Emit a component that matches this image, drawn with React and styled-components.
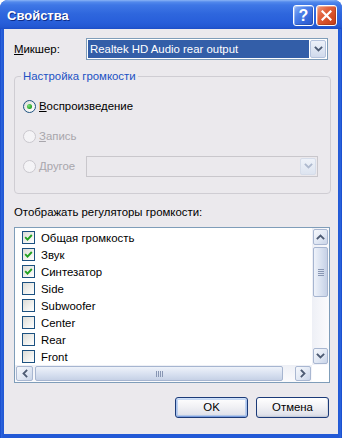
import React from "react";
import styled, { createGlobalStyle } from "styled-components";

const GlobalStyle = createGlobalStyle`
  html, body { margin: 0; padding: 0; background: #ffffff; }
  body { font-family: "Liberation Sans", Arial, sans-serif; font-size: 11.4px; color: #000; }
  * { box-sizing: border-box; }
`;

const Window = styled.div`
  width: 342px;
  height: 438px;
  display: flex;
  flex-direction: column;
  background: linear-gradient(to right, #0B3CC4 0px, #2D66DD 1px, #2259D6 3px, #2259D6 calc(100% - 3px), #2D66DD calc(100% - 1px), #0B3CC4 100%);
  border-radius: 8px 8px 0 0;
  overflow: hidden;
`;

const TitleBar = styled.div`
  height: 29px;
  flex: none;
  display: flex;
  align-items: center;
  padding: 2px 5px 0 7px;
  background: linear-gradient(to bottom, #8AB4F6 0px, #5289EC 2px, #3E77E6 5px, #2E66DD 14px, #285FDA 22px, #2358D2 27px, #1C4DC6 29px);
`;

const Title = styled.div`
  flex: 1;
  color: #ffffff;
  font-family: "Liberation Sans", Arial, sans-serif;
  font-weight: bold;
  font-size: 13px;
  text-shadow: 1px 1px 0 #0E2D88;
`;

const CaptionButtons = styled.div`
  display: flex;
  gap: 2px;
`;

const CaptionButton = styled.div`
  width: 21px;
  height: 21px;
  border: 1px solid #ffffff;
  border-radius: 3px;
  display: flex;
  align-items: center;
  justify-content: center;
  color: #ffffff;
  font-family: "Liberation Sans", Arial, sans-serif;
  font-weight: bold;
  font-size: 16px;
  background: ${(p) =>
    p.$close
      ? "linear-gradient(135deg, #F09A7C 0%, #E2643F 35%, #D24B24 70%, #C23E1C 100%)"
      : "linear-gradient(135deg, #8EB2F5 0%, #4F82EA 35%, #3566DA 70%, #2C58CC 100%)"};
  box-shadow: inset 1px 1px 0 rgba(255, 255, 255, 0.35), inset -1px -1px 0 rgba(0, 0, 0, 0.15);
`;

const Client = styled.div`
  flex: 1;
  margin: 0 4px 4px;
  background: #EBE9ED;
  padding: 9px 8px 0 10px;
  display: flex;
  flex-direction: column;
`;

const MixerRow = styled.div`
  display: flex;
  align-items: center;
  height: 22px;
  margin-right: 2px;
`;

const FieldLabel = styled.div`
  width: ${(p) => p.$width || "auto"};
  flex: none;
  color: ${(p) => (p.$disabled ? "#A8A6AC" : "#000")};
  line-height: 13px;
`;

const Accel = styled.span`
  text-decoration: underline;
`;

const Combo = styled.div`
  flex: 1;
  height: ${(p) => p.$height || "22px"};
  display: flex;
  align-items: stretch;
  gap: 1px;
  padding: 1px;
  border: 1px solid ${(p) => (p.$disabled ? "#C9C7CC" : "#7F9DB9")};
  background: ${(p) => (p.$disabled ? "#EBE9ED" : "#ffffff")};
`;

const ComboValue = styled.div`
  flex: 1;
  display: flex;
  align-items: center;
  padding: 0 2px;
  color: #ffffff;
  background: ${(p) => (p.$selected ? "#335EA8" : "transparent")};
  white-space: nowrap;
  overflow: hidden;
`;

const ComboArrow = styled.div`
  width: 16px;
  flex: none;
  display: flex;
  align-items: center;
  justify-content: center;
  border: 1px solid ${(p) => (p.$disabled ? "#D6DDEA" : "#B4C2DC")};
  border-radius: 2px;
  background: ${(p) =>
    p.$disabled
      ? "linear-gradient(to bottom, #EEF2F9, #DDE4F0)"
      : "linear-gradient(to bottom, #EDF1F9, #D0DAEC)"};
`;

const Group = styled.fieldset`
  margin: 10px -1px 0 0;
  padding: 12px 12px 16px 8px;
  border: 1px solid #CFCDD3;
  border-radius: 4px;
  min-width: 0;
  display: flex;
  flex-direction: column;
  gap: 8px;
`;

const Legend = styled.legend`
  padding: 0 2px;
  margin-left: -2px;
  color: #2152C4;
  line-height: 13px;
`;

const RadioRow = styled.div`
  height: 22px;
  display: flex;
  align-items: center;
`;

const RadioLabel = styled.div`
  display: flex;
  align-items: center;
  gap: 3px;
  width: ${(p) => p.$width || "auto"};
  flex: none;
`;

const RadioCircle = styled.span`
  width: 13px;
  height: 13px;
  flex: none;
  border-radius: 50%;
  display: flex;
  align-items: center;
  justify-content: center;
  border: 1px solid ${(p) => (p.$disabled ? "#CAC8CE" : "#1C5180")};
  background: ${(p) =>
    p.$disabled
      ? "#F4F3F6"
      : "linear-gradient(135deg, #DCDCD7 0%, #F4F4F2 60%, #FFFFFF 100%)"};
`;

const RadioDot = styled.span`
  width: 5px;
  height: 5px;
  border-radius: 50%;
  background: radial-gradient(circle at 35% 35%, #7BE07A, #21A121 70%, #108A10);
`;

const SectionLabel = styled.div`
  margin-top: 12px;
  line-height: 13px;
`;

const ListBox = styled.div`
  margin-top: 8px;
  height: 156px;
  border: 1px solid #7F9DB9;
  background: #ffffff;
  display: grid;
  grid-template-columns: 1fr 17px;
  grid-template-rows: 1fr 17px;
`;

const Items = styled.div`
  padding-top: 1px;
  overflow: hidden;
`;

const Item = styled.div`
  height: 17px;
  display: flex;
  align-items: center;
  gap: 6px;
  padding-left: 7px;
  white-space: nowrap;
`;

const CheckBox = styled.span`
  width: 13px;
  height: 13px;
  flex: none;
  display: flex;
  align-items: center;
  justify-content: center;
  border: 1px solid #1C5180;
  background: linear-gradient(135deg, #DCDCD7 0%, #F2F2EF 60%, #FFFFFF 100%);
`;

const VScroll = styled.div`
  display: flex;
  flex-direction: column;
  padding: 1px;
  background: linear-gradient(to right, #EEF0F6, #FBFBFD);
`;

const HScroll = styled.div`
  display: flex;
  flex-direction: row;
  padding: 1px;
  background: linear-gradient(to bottom, #EEF0F6, #FBFBFD);
`;

const Corner = styled.div`
  background: #ffffff;
`;

const ScrollButton = styled.div`
  flex: none;
  width: ${(p) => p.$w}px;
  height: ${(p) => p.$h}px;
  display: flex;
  align-items: center;
  justify-content: center;
  border: 1px solid #A9B7D1;
  border-radius: 2px;
  background: linear-gradient(135deg, #F6F8FC 0%, #E1E8F4 55%, #C9D4E8 100%);
`;

const Thumb = styled.div`
  flex: none;
  display: flex;
  align-items: center;
  justify-content: center;
  border: 1px solid #A6B5D0;
  border-radius: 2px;
  ${(p) =>
    p.$vertical
      ? `margin-top: 2px; height: 50px; background: linear-gradient(to right, #EEF2FA, #D6DFEF 60%, #C6D1E6);`
      : `margin-left: 2px; width: 248px; background: linear-gradient(to bottom, #EEF2FA, #D6DFEF 60%, #C6D1E6);`}
`;

const Grip = styled.div`
  display: flex;
  flex-direction: ${(p) => (p.$vertical ? "column" : "row")};
  gap: 1px;
`;

const GripLine = styled.span`
  display: block;
  background: #8896B3;
  ${(p) => (p.$vertical ? "width: 6px; height: 1px;" : "width: 1px; height: 6px;")}
`;

const Spacer = styled.div`
  flex: 1;
`;

const ButtonRow = styled.div`
  margin-top: 14px;
  margin-right: 1px;
  display: flex;
  justify-content: flex-end;
  gap: 8px;
`;

const Button = styled.div`
  width: 73px;
  height: 21px;
  display: flex;
  align-items: center;
  justify-content: center;
  border: 1px solid #1B3A78;
  border-radius: 3px;
  background: linear-gradient(to bottom, #FFFFFF 0%, #F3F3F6 40%, #E2E4EC 85%, #CDD2DE 100%);
  box-shadow: ${(p) =>
    p.$default
      ? "inset 0 1px 0 #CEE0FA, inset 1px 0 0 #A9C3EE, inset -1px 0 0 #A9C3EE, inset 0 -1px 0 #7C9EDE, inset 0 0 0 2px rgba(152, 184, 234, 0.55)"
      : "inset 0 -1px 0 #C6CBD8, inset -1px 0 0 #D8DCE5"};
  line-height: 13px;
`;

const Chevron = ({ dir = "down", color = "#4D5B73" }) => {
  const paths = {
    down: "M1.5 1.5 L4.5 4.5 L7.5 1.5",
    up: "M1.5 4.5 L4.5 1.5 L7.5 4.5",
  };
  if (dir === "left" || dir === "right") {
    const d = dir === "left" ? "M4.5 1.5 L1.5 4.5 L4.5 7.5" : "M1.5 1.5 L4.5 4.5 L1.5 7.5";
    return (
      <svg width="6" height="9" viewBox="0 0 6 9">
        <path d={d} fill="none" stroke={color} strokeWidth="1.8" strokeLinecap="square" />
      </svg>
    );
  }
  return (
    <svg width="9" height="6" viewBox="0 0 9 6">
      <path d={paths[dir]} fill="none" stroke={color} strokeWidth="1.8" strokeLinecap="square" />
    </svg>
  );
};

const CheckMark = () => (
  <svg width="9" height="9" viewBox="0 0 9 9">
    <path d="M1.2 4.2 L3.5 6.6 L7.8 2" fill="none" stroke="#21A121" strokeWidth="1.9" />
  </svg>
);

const CloseX = () => (
  <svg width="11" height="11" viewBox="0 0 11 11">
    <path d="M1.5 1.5 L9.5 9.5 M9.5 1.5 L1.5 9.5" stroke="#ffffff" strokeWidth="2.2" strokeLinecap="square" />
  </svg>
);

const items = [
  { label: "Общая громкость", checked: true },
  { label: "Звук", checked: true },
  { label: "Синтезатор", checked: true },
  { label: "Side", checked: false },
  { label: "Subwoofer", checked: false },
  { label: "Center", checked: false },
  { label: "Rear", checked: false },
  { label: "Front", checked: false },
];

export default function App() {
  return (
    <>
      <GlobalStyle />
      <Window>
        <TitleBar>
          <Title>Свойства</Title>
          <CaptionButtons>
            <CaptionButton>?</CaptionButton>
            <CaptionButton $close>
              <CloseX />
            </CaptionButton>
          </CaptionButtons>
        </TitleBar>
        <Client>
          <MixerRow>
            <FieldLabel $width="72px">
              <Accel>М</Accel>икшер:
            </FieldLabel>
            <Combo>
              <ComboValue $selected>Realtek HD Audio rear output</ComboValue>
              <ComboArrow>
                <Chevron dir="down" />
              </ComboArrow>
            </Combo>
          </MixerRow>

          <Group>
            <Legend>Настройка громкости</Legend>
            <RadioRow>
              <RadioLabel>
                <RadioCircle>
                  <RadioDot />
                </RadioCircle>
                <FieldLabel>
                  <Accel>В</Accel>оспроизведение
                </FieldLabel>
              </RadioLabel>
            </RadioRow>
            <RadioRow>
              <RadioLabel>
                <RadioCircle $disabled />
                <FieldLabel $disabled>
                  <Accel>З</Accel>апись
                </FieldLabel>
              </RadioLabel>
            </RadioRow>
            <RadioRow>
              <RadioLabel $width="63px">
                <RadioCircle $disabled />
                <FieldLabel $disabled>
                  <Accel>Д</Accel>ругое
                </FieldLabel>
              </RadioLabel>
              <Combo $disabled $height="21px">
                <ComboValue />
                <ComboArrow $disabled>
                  <Chevron dir="down" color="#AEB9CE" />
                </ComboArrow>
              </Combo>
            </RadioRow>
          </Group>

          <SectionLabel>Отображать регуляторы громкости:</SectionLabel>

          <ListBox>
            <Items>
              {items.map((it) => (
                <Item key={it.label}>
                  <CheckBox>{it.checked && <CheckMark />}</CheckBox>
                  {it.label}
                </Item>
              ))}
            </Items>
            <VScroll>
              <ScrollButton $w={15} $h={16}>
                <Chevron dir="up" />
              </ScrollButton>
              <Thumb $vertical>
                <Grip $vertical>
                  <GripLine $vertical />
                  <GripLine $vertical />
                  <GripLine $vertical />
                  <GripLine $vertical />
                </Grip>
              </Thumb>
              <Spacer />
              <ScrollButton $w={15} $h={16}>
                <Chevron dir="down" />
              </ScrollButton>
            </VScroll>
            <HScroll>
              <ScrollButton $w={17} $h={15}>
                <Chevron dir="left" />
              </ScrollButton>
              <Thumb>
                <Grip>
                  <GripLine />
                  <GripLine />
                  <GripLine />
                  <GripLine />
                </Grip>
              </Thumb>
              <Spacer />
              <ScrollButton $w={16} $h={15}>
                <Chevron dir="right" />
              </ScrollButton>
            </HScroll>
            <Corner />
          </ListBox>

          <ButtonRow>
            <Button $default>OK</Button>
            <Button>Отмена</Button>
          </ButtonRow>
        </Client>
      </Window>
    </>
  );
}
